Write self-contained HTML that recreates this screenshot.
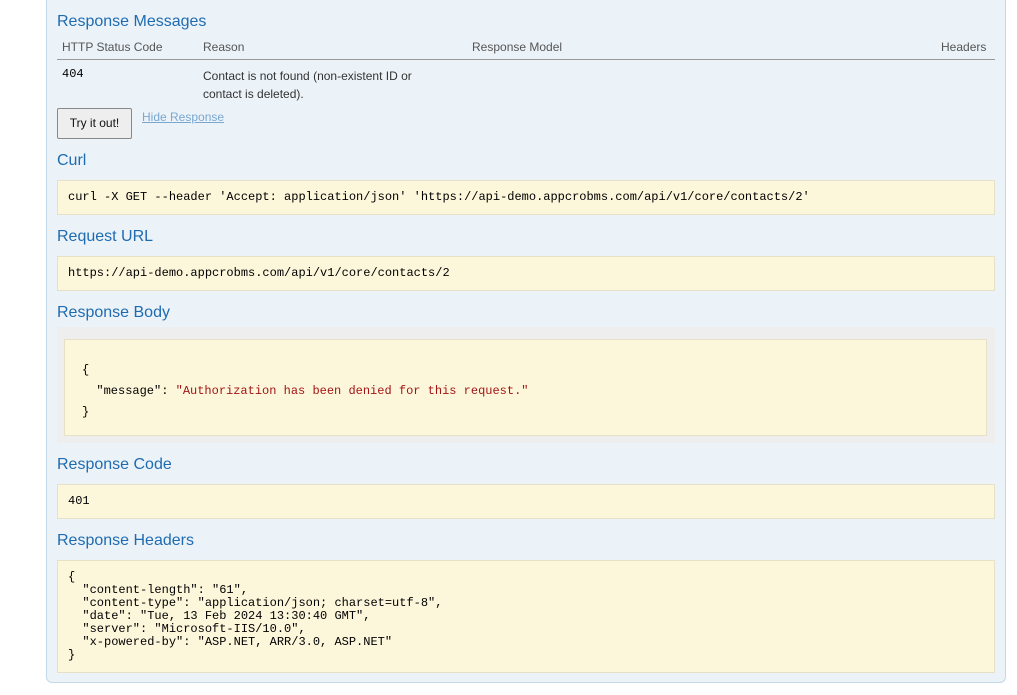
<!DOCTYPE html>
<html><head><style>
body{margin:0;background:#fff;width:1017px;height:695px;overflow:hidden;font-family:"Liberation Sans",sans-serif;position:relative}
.c{position:absolute;left:46px;top:-10px;width:958px;height:692px;background:#ebf3f9;border:1px solid #c5d8e8;border-radius:0 0 6px 6px;border-top:none}
.a{position:absolute}
h4{position:absolute;margin:0;font-weight:normal;font-size:16px;color:#1f6bb0;left:57px}
.box{position:absolute;left:57px;width:936px;background:#fcf6db;border:1px solid #e5e0c6;font-family:"Liberation Mono",monospace;font-size:12px;color:#000}
.sm{font-size:12px;color:#555}
</style></head><body>
<div class="c"></div>
<h4 style="top:13px">Response Messages</h4>
<div class="a sm" style="left:62px;top:40px">HTTP Status Code</div>
<div class="a sm" style="left:203px;top:40px">Reason</div>
<div class="a sm" style="left:472px;top:40px">Response Model</div>
<div class="a sm" style="left:941px;top:40px">Headers</div>
<div class="a" style="left:57px;top:59px;width:938px;height:1px;background:#999"></div>
<div class="a" style="left:62px;top:67px;font-family:'Liberation Mono',monospace;font-size:12px">404</div>
<div class="a" style="left:203px;top:67px;font-size:12px;line-height:18px;color:#333">Contact is not found (non-existent ID or<br>contact is deleted).</div>
<div class="a" style="left:57px;top:108px;width:73px;height:29px;border:1px solid #888;border-radius:2px;background:#eee;font-size:12px;line-height:29px;text-align:center;color:#111">Try it out!</div>
<div class="a" style="left:142px;top:110px;font-size:12px;color:#7aa7d0;text-decoration:underline">Hide Response</div>
<h4 style="top:152px">Curl</h4>
<div class="box" style="top:180px;height:33px;line-height:33px;text-indent:10px">curl -X GET --header 'Accept: application/json' 'https://api-demo.appcrobms.com/api/v1/core/contacts/2'</div>
<h4 style="top:228px">Request URL</h4>
<div class="box" style="top:256px;height:33px;line-height:33px;text-indent:10px">https://api-demo.appcrobms.com/api/v1/core/contacts/2</div>
<h4 style="top:304px">Response Body</h4>
<div class="a" style="left:57px;top:327px;width:938px;height:116px;background:#eeeeee"></div>
<div class="box" style="left:64px;top:339px;width:921px;height:95px;white-space:pre;line-height:21px;padding-top:0"><div style="position:absolute;left:17px;top:20px;color:#000">{
  "message": <span style="color:#a31515">"Authorization has been denied for this request."</span>
}</div></div>
<h4 style="top:456px">Response Code</h4>
<div class="box" style="top:484px;height:33px;line-height:33px;text-indent:10px">401</div>
<h4 style="top:532px">Response Headers</h4>
<div class="box" style="top:560px;height:111px;white-space:pre;line-height:13px"><div style="position:absolute;left:10px;top:10px">{
  "content-length": "61",
  "content-type": "application/json; charset=utf-8",
  "date": "Tue, 13 Feb 2024 13:30:40 GMT",
  "server": "Microsoft-IIS/10.0",
  "x-powered-by": "ASP.NET, ARR/3.0, ASP.NET"
}</div></div>
</body></html>
